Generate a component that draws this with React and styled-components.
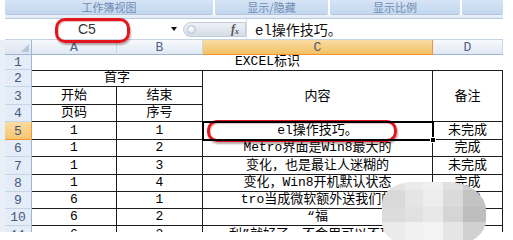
import React from 'react';
import styled, { createGlobalStyle } from 'styled-components';

const GlobalStyle = createGlobalStyle`
  html, body { margin: 0; padding: 0; background: #fff; }
  * { box-sizing: border-box; }
`;

const CELL_FONT = `"Liberation Mono", "Noto Sans CJK SC", monospace`;
const CJK_SANS = `"Noto Sans CJK SC", "Noto Sans", sans-serif`;

// ---- data
const bands = ['工作簿视图', '显示/隐藏', '显示比例', ''];

const rows = [
  { n: 5, a: '1', b: '1', c: 'el操作技巧。', d: '未完成', active: true },
  { n: 6, a: '1', b: '2', c: 'Metro界面是Win8最大的', d: '完成' },
  { n: 7, a: '1', b: '3', c: '变化，也是最让人迷糊的', d: '未完成' },
  { n: 8, a: '1', b: '4', c: '变化，Win8开机默认状态', d: '完成' },
  { n: 9, a: '6', b: '1', c: 'tro当成微软额外送我们的', d: '完成' },
  { n: 10, a: '6', b: '2', c: '“福', d: '完成' },
  { n: 11, a: '6', b: '3', c: '利”就好了，不会用可以不理它', d: '完成' },
];

const mosaic = [
  ['#e3e3e3', '#ebebeb', '#efefef', '#e0e0e0', '#cfcfcf'],
  ['#d9d9d9', '#e5e5e5', '#ededed', '#dadada', '#c3c3c3'],
  ['#dcdcdc', '#e1e1e1', '#e8e8e8', '#d5d5d5', '#bdbdbd'],
  ['#ebebeb', '#f1f1f1', '#f3f3f3', '#e5e5e5', '#d1d1d1'],
];

const App = () => {
  return (
    <Page>
      <GlobalStyle />
      <Frame>
        <Ribbon>
          {bands.map((b, i) => <Band key={i}>{b}</Band>)}
        </Ribbon>
        <Spacer />
        <FormulaBar>
          <NameBox>
            <span>C5</span>
            <Arrow />
          </NameBox>
          <FxPill>
            <PillDot />
            <Fx>f<sub>x</sub></Fx>
          </FxPill>
          <Formula>el操作技巧。</Formula>
        </FormulaBar>
        <Sheet>
          <Corner>
            <svg width="8" height="8" viewBox="0 0 8 8"><path d="M8 0 L8 8 L0 8 Z" fill="#b9c6d6" /></svg>
          </Corner>
          <ColHead>A</ColHead>
          <ColHead>B</ColHead>
          <ColHead $sel>C</ColHead>
          <ColHead>D</ColHead>

          <RowHead>1</RowHead>
          <Cell $bare $span={4}>EXCEL标识</Cell>

          <RowHead>2</RowHead>
          <Cell $top $span={2}>首字</Cell>
          <Cell $top $rows={3} $mid>内容</Cell>
          <Cell $top $rows={3} $mid>备注</Cell>

          <RowHead>3</RowHead>
          <Cell>开始</Cell>
          <Cell>结束</Cell>

          <RowHead>4</RowHead>
          <Cell>页码</Cell>
          <Cell>序号</Cell>

          {rows.map((r) => (
            <React.Fragment key={r.n}>
              <RowHead $sel={r.active}>{r.n}</RowHead>
              <Cell>{r.a}</Cell>
              <Cell>{r.b}</Cell>
              <Cell $active={r.active}>
                {r.c}
                {r.active && <FillHandle />}
              </Cell>
              <Cell>{r.d}</Cell>
            </React.Fragment>
          ))}
        </Sheet>
      </Frame>

      <RedRing $x={55} $y={18} $w={75} $h={25} />
      <RedRing $x={207} $y={120} $w={190} $h={22} />

      <Mosaic>
        {mosaic.flat().map((c, i) => <Tile key={i} style={{ background: c }} />)}
      </Mosaic>
    </Page>
  );
};

export default App;

// ------ UI component definition
const Page = styled.div`
  position: relative;
  width: 513px;
  height: 240px;
  overflow: hidden;
  background: #fff;
`;

const Frame = styled.div`
  width: 503px;
  height: 232px;
  display: flex;
  flex-direction: column;
  overflow: hidden;
`;

const Ribbon = styled.div`
  display: grid;
  grid-template-columns: 208px 113px 130px 41px;
  column-gap: 2px;
  height: 15px;
  padding-left: 5px;
  background: #fff;
`;

const Band = styled.div`
  background: linear-gradient(#d6e4f5, #c3d7ef);
  border-bottom: 1px solid #aec4e0;
  border-radius: 0 0 2px 2px;
  color: #6f8ab2;
  font: 11px/14px ${CJK_SANS};
  text-align: center;
`;

const Spacer = styled.div`
  height: 4px;
  margin-left: 5px;
  background: linear-gradient(#eef3fa, #dfe8f4);
  border-bottom: 1px solid #b8cbe2;
`;

const FormulaBar = styled.div`
  display: flex;
  align-items: stretch;
  height: 21px;
  margin-left: 5px;
  background: #fff;
  border-bottom: 1px solid #c4d3e6;
`;

const NameBox = styled.div`
  width: 178px;
  display: flex;
  align-items: center;
  padding-left: 73px;
  font: 14px "Liberation Sans", sans-serif;
  color: #333;
`;

const Arrow = styled.span`
  margin-left: auto;
  margin-right: 6px;
  width: 0;
  height: 0;
  border-left: 3.5px solid transparent;
  border-right: 3.5px solid transparent;
  border-top: 4px solid #111;
`;

const FxPill = styled.div`
  width: 63px;
  height: 15px;
  align-self: center;
  display: flex;
  align-items: center;
  justify-content: space-between;
  padding: 0 6px 0 3px;
  background: linear-gradient(#eef2f7, #d4dce7);
  border: 1px solid #c2ccd9;
  border-radius: 8px 0 0 8px;
`;

const PillDot = styled.span`
  width: 9px;
  height: 9px;
  border-radius: 50%;
  background: radial-gradient(circle at 40% 35%, #fff, #cfd8e3);
  border: 1px solid #b8c3d1;
`;

const Fx = styled.span`
  font: italic bold 12px "Liberation Serif", serif;
  color: #555;
  sub { font-size: 8px; vertical-align: -1px; }
`;

const Formula = styled.div`
  flex: 1;
  display: flex;
  align-items: center;
  padding-left: 8px;
  border-left: 1px solid #d3dce8;
  font: 14px ${CELL_FONT};
  color: #111;
`;

const Sheet = styled.div`
  position: relative;
  display: grid;
  grid-template-columns: 27px 85px 86px 230px 70px;
  grid-template-rows: 15px 15px 17px 18px 17px 18px 17px 18px 17px 17px 17px 18px;
  padding-left: 5px;
  background: linear-gradient(to right, #e9eff7 5px, #fff 5px);
  flex: 1;
  overflow: hidden;
`;

const Corner = styled.div`
  display: flex;
  align-items: flex-end;
  justify-content: flex-end;
  padding: 0 2px 2px 0;
  background: linear-gradient(#eef3f9, #dbe5f1);
  border-right: 1px solid #9eb6ce;
  border-bottom: 1px solid #9eb6ce;
`;

const ColHead = styled.div`
  display: flex;
  align-items: center;
  justify-content: center;
  font: 13px ${CELL_FONT};
  color: ${(p) => (p.$sel ? '#4b5a72' : '#4d6185')};
  background: ${(p) => (p.$sel ? 'linear-gradient(#fbdca3, #f2c165)' : 'linear-gradient(#f8fafd, #dfe8f3)')};
  border-right: 1px solid ${(p) => (p.$sel ? '#f29536' : '#c9d7e7')};
  border-bottom: 1px solid ${(p) => (p.$sel ? '#f29536' : '#9eb6ce')};
`;

const RowHead = styled.div`
  display: flex;
  align-items: center;
  justify-content: center;
  padding-top: 1px;
  font: 13px ${CELL_FONT};
  color: #45597b;
  background: ${(p) => (p.$sel ? 'linear-gradient(#fbdca3, #f4c670)' : '#e4ecf7')};
  border-right: 1px solid ${(p) => (p.$sel ? '#f29536' : '#9eb6ce')};
  border-bottom: 1px solid ${(p) => (p.$sel ? '#f29536' : '#c5d4e6')};
`;

const Cell = styled.div`
  position: relative;
  grid-column: span ${(p) => p.$span || 1};
  grid-row: span ${(p) => p.$rows || 1};
  display: flex;
  align-items: ${(p) => (p.$mid ? 'center' : 'flex-end')};
  justify-content: center;
  padding-bottom: ${(p) => (p.$mid ? 0 : 1)}px;
  font: 13px/15px ${CELL_FONT};
  color: #000;
  white-space: nowrap;
  overflow: ${(p) => (p.$active ? 'visible' : 'hidden')};
  border-right: ${(p) => (p.$bare ? 'none' : '1px solid #1c1c1c')};
  border-bottom: ${(p) => (p.$bare ? 'none' : '1px solid #1c1c1c')};
  border-top: ${(p) => (p.$top ? '1px solid #1c1c1c' : 'none')};
  outline: ${(p) => (p.$active ? '2px solid #000' : 'none')};
  outline-offset: -1px;
  z-index: ${(p) => (p.$active ? 1 : 0)};
`;

const FillHandle = styled.span`
  position: absolute;
  right: -4px;
  bottom: -4px;
  width: 6px;
  height: 6px;
  background: #000;
  border: 1px solid #fff;
`;

const RedRing = styled.div`
  position: absolute;
  left: ${(p) => p.$x}px;
  top: ${(p) => p.$y}px;
  width: ${(p) => p.$w}px;
  height: ${(p) => p.$h}px;
  border: 3px solid #e3141b;
  border-radius: 10px;
  box-shadow: 1px 2px 2px rgba(60, 0, 0, 0.35), inset 1px 1px 1px rgba(120, 0, 0, 0.25);
  pointer-events: none;
`;

const Mosaic = styled.div`
  position: absolute;
  left: 382px;
  top: 182px;
  width: 104px;
  height: 62px;
  display: grid;
  grid-template-columns: 23px 18px 20px 20px 23px;
  grid-template-rows: 8px 17px 15px 22px;
  border-radius: 30px 38px 30px 24px / 22px 28px 24px 22px;
  overflow: hidden;
`;

const Tile = styled.div``;
